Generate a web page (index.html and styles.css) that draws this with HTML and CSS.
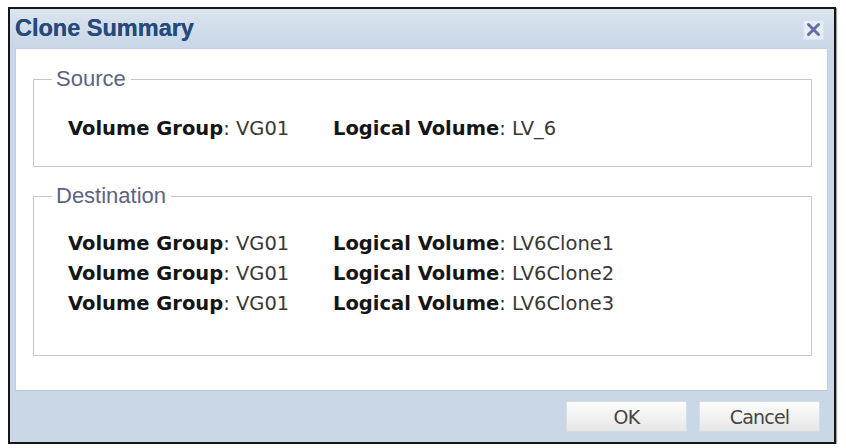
FILE: index.html
```html
<!DOCTYPE html>
<html lang="en">
<head>
<meta charset="utf-8">
<title>Clone Summary</title>
<link rel="stylesheet" href="styles.css">
</head>
<body>
<div class="dialog">
  <div class="dialog-header">
    <span class="dialog-title">Clone Summary</span>
    <button class="close-btn" type="button" aria-label="Close">
      <svg width="15" height="15" viewBox="0 0 15 15">
        <path d="M2.5 2.5 L12.5 12.5 M12.5 2.5 L2.5 12.5" stroke="#676ea6" stroke-width="3" stroke-linecap="round"/>
      </svg>
    </button>
  </div>
  <div class="dialog-body">
    <fieldset class="group group-source">
      <legend>Source</legend>
      <div class="rows">
        <div class="row">
          <span class="cell"><b>Volume Group</b>: VG01</span>
          <span class="cell"><b>Logical Volume</b>: LV_6</span>
        </div>
      </div>
    </fieldset>
    <fieldset class="group group-dest">
      <legend>Destination</legend>
      <div class="rows">
        <div class="row">
          <span class="cell"><b>Volume Group</b>: VG01</span>
          <span class="cell"><b>Logical Volume</b>: LV6Clone1</span>
        </div>
        <div class="row">
          <span class="cell"><b>Volume Group</b>: VG01</span>
          <span class="cell"><b>Logical Volume</b>: LV6Clone2</span>
        </div>
        <div class="row">
          <span class="cell"><b>Volume Group</b>: VG01</span>
          <span class="cell"><b>Logical Volume</b>: LV6Clone3</span>
        </div>
      </div>
    </fieldset>
  </div>
  <div class="dialog-footer">
    <button class="btn" type="button">OK</button>
    <button class="btn" type="button">Cancel</button>
  </div>
</div>
</body>
</html>
```

FILE: styles.css
```css
html, body {
  margin: 0;
  padding: 0;
  background: #ffffff;
}

body {
  font-family: "DejaVu Sans", Verdana, sans-serif;
}

.dialog {
  box-sizing: border-box;
  width: 828px;
  height: 437px;
  margin: 7px 0 0 8px;
  border: 2px solid #161616;
  background: #c9d7e8;
  display: flex;
  flex-direction: column;
  box-shadow: 1px 1px 1px rgba(0, 0, 0, 0.35);
}

.dialog-header {
  height: 39px;
  flex: none;
  display: flex;
  align-items: center;
  justify-content: space-between;
  padding: 0 10px 0 5px;
  background: linear-gradient(#dbe4ef, #c8d6e6);
}

.dialog-title {
  font-family: "Liberation Sans", Arial, sans-serif;
  font-weight: bold;
  font-size: 23.5px;
  color: #264a7c;
  text-shadow: 0 0 0.6px #264a7c;
}

.close-btn {
  width: 21px;
  height: 20px;
  padding: 0;
  margin-top: 2px;
  border: 1px solid #d9e2ee;
  background: #e7edf5;
  display: flex;
  align-items: center;
  justify-content: center;
}

.dialog-body {
  flex: 1;
  margin: 0 6px 0 5px;
  padding: 20px 15px 0 17px;
  background: #ffffff;
  border: 1px solid #c0cedf;
  border-bottom-color: #b7c6d8;
}

.group {
  margin: 0;
  padding: 0 0 0 18px;
  border: 1px solid #c6c6c6;
}

.group legend {
  padding: 0 5px 0 4px;
  font-family: "Liberation Sans", Arial, sans-serif;
  font-size: 22px;
  line-height: 20px;
  color: #5b6389;
}

.group-source .rows {
  padding: 25px 0 22px;
}

.group-dest {
  margin-top: 19px;
}

.group-dest .rows {
  padding: 23px 0 36px;
}

.rows {
  margin-left: 16px;
}

.row {
  display: grid;
  grid-template-columns: 265px auto;
  line-height: 30px;
  font-size: 19.5px;
  color: #383838;
}

.row b {
  color: #151515;
  font-weight: bold;
}

.dialog-footer {
  height: 51px;
  flex: none;
  display: flex;
  align-items: center;
  justify-content: flex-end;
  gap: 12px;
  padding: 0 14px 0 0;
  background: #cad7e7;
}

.btn {
  width: 121px;
  height: 31px;
  padding: 0;
  border: 1px solid #d7dde5;
  border-radius: 1px;
  background: linear-gradient(#fdfdfd, #f1f1f1 55%, #e6e6e6);
  font-family: "DejaVu Sans", Tahoma, sans-serif;
  font-size: 19px;
  letter-spacing: -0.8px;
  color: #454545;
}
```
